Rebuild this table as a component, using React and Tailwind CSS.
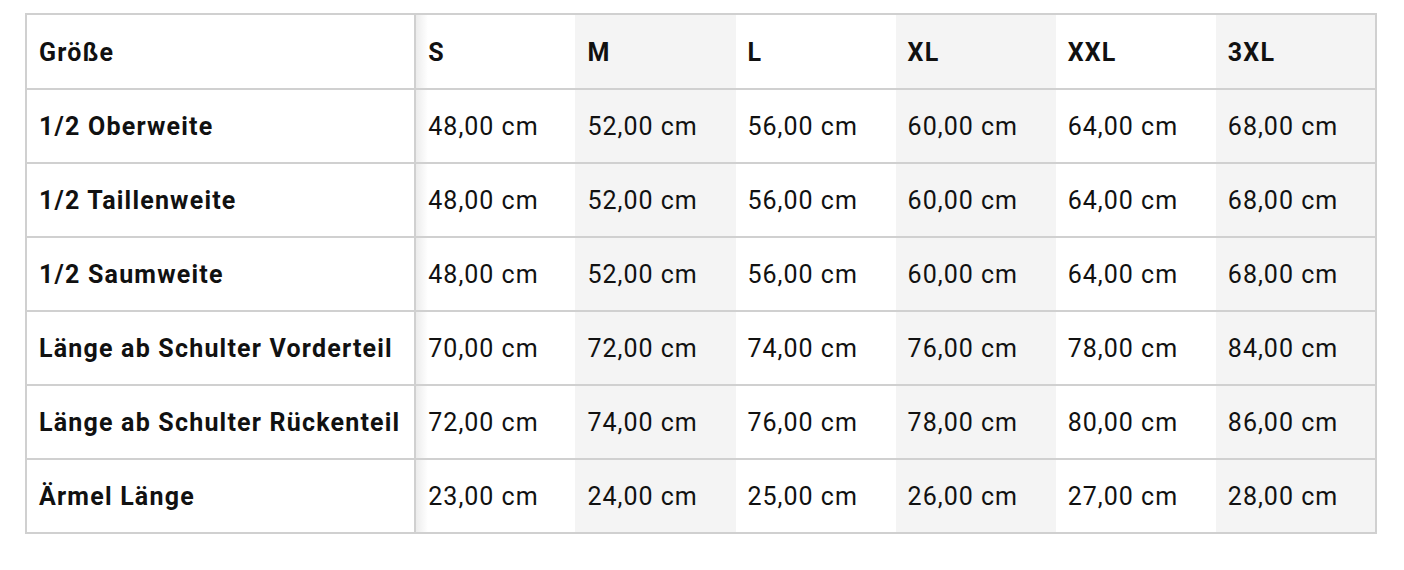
import React from "react";

const sizes = ["S", "M", "L", "XL", "XXL", "3XL"];

const rows = [
  { label: "1/2 Oberweite", values: ["48,00", "52,00", "56,00", "60,00", "64,00", "68,00"] },
  { label: "1/2 Taillenweite", values: ["48,00", "52,00", "56,00", "60,00", "64,00", "68,00"] },
  { label: "1/2 Saumweite", values: ["48,00", "52,00", "56,00", "60,00", "64,00", "68,00"] },
  { label: "Länge ab Schulter Vorderteil", values: ["70,00", "72,00", "74,00", "76,00", "78,00", "84,00"] },
  { label: "Länge ab Schulter Rückenteil", values: ["72,00", "74,00", "76,00", "78,00", "80,00", "86,00"] },
  { label: "Ärmel Länge", values: ["23,00", "24,00", "25,00", "26,00", "27,00", "28,00"] },
];

// column backgrounds: S has the sticky shadow, M / XL / 3XL are striped
const colBg = (i) => {
  if (i === 0) return "bg-[linear-gradient(to_right,#ececec,#ffffff_12px)]";
  return i % 2 === 1 ? "bg-[#f4f4f4]" : "bg-white";
};

export default function App() {
  return (
    <div className="min-h-screen bg-white pl-[25px] pt-[13px] font-['Roboto',sans-serif] text-[#111]">
      <table className="border-collapse border-2 border-[#d0d0d0] w-[1352px] table-fixed">
        <colgroup>
          <col className="w-[389px]" />
          {sizes.map((s) => (
            <col key={s} className="w-[160px]" />
          ))}
        </colgroup>
        <thead>
          <tr className="h-[75px] border-b-2 border-[#d0d0d0]">
            <th className="border-r-2 border-[#d0d0d0] bg-white pl-3 pt-[3px] text-left text-[25px] font-bold tracking-[1.2px]">
              Größe
            </th>
            {sizes.map((s, i) => (
              <th key={s} className={`${colBg(i)} pl-3 pt-[3px] text-left text-[25px] font-bold tracking-[1.2px]`}>
                {s}
              </th>
            ))}
          </tr>
        </thead>
        <tbody>
          {rows.map((row) => (
            <tr key={row.label} className="h-[74px] border-b-2 border-[#d0d0d0]">
              <td className="border-r-2 border-[#d0d0d0] bg-white pl-3 pt-[2px] text-[25px] font-bold tracking-[1.2px] whitespace-nowrap">
                {row.label}
              </td>
              {row.values.map((v, i) => (
                <td key={i} className={`${colBg(i)} pl-3 pt-[2px] text-[25px] tracking-[1px] whitespace-nowrap`}>
                  {v} cm
                </td>
              ))}
            </tr>
          ))}
        </tbody>
      </table>
    </div>
  );
}
